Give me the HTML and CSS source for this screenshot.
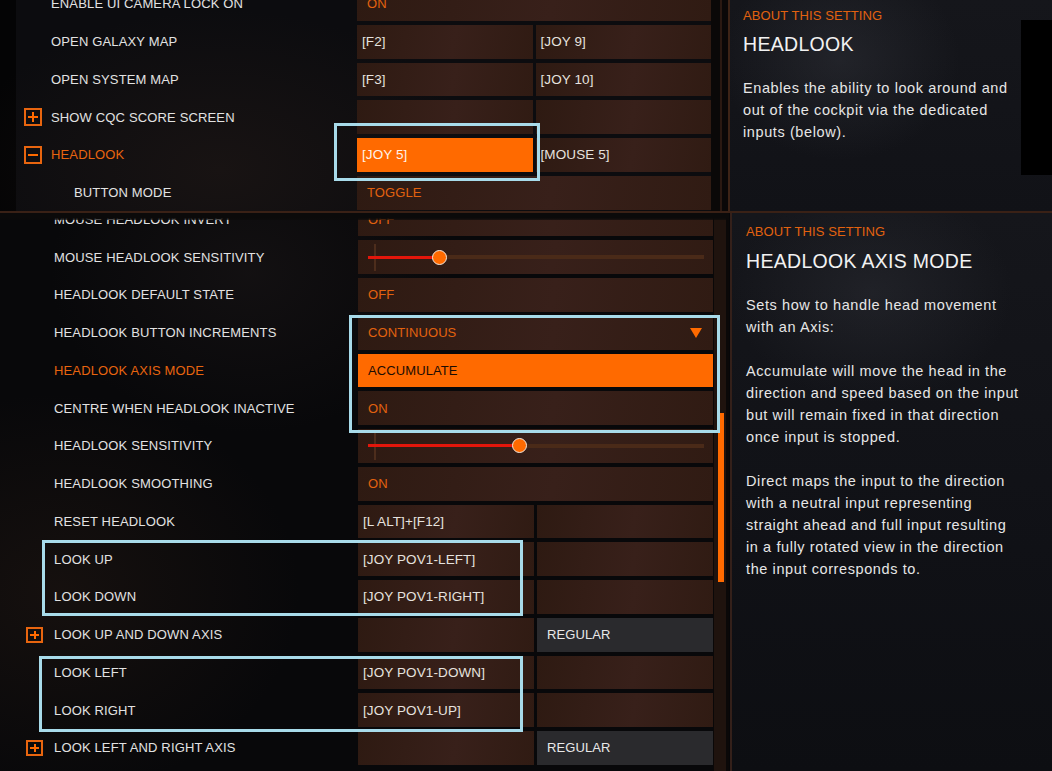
FILE: index.html
```html
<!DOCTYPE html>
<html lang="en">
<head>
  <meta charset="UTF-8">
  <title>Controls - Headlook</title>
  <link rel="stylesheet" href="styles.css">
</head>
<body>
  <div class="screen">

    <!-- upper list: general bindings -->
    <section class="panel panel-top">
      <div class="bindings">
        <div class="row">
          <div class="label">ENABLE UI CAMERA LOCK ON</div>
          <div class="cells"><div class="cell wide option">ON</div></div>
        </div>
        <div class="row">
          <div class="label">OPEN GALAXY MAP</div>
          <div class="cells"><div class="cell key">[F2]</div><div class="cell key">[JOY 9]</div></div>
        </div>
        <div class="row">
          <div class="label">OPEN SYSTEM MAP</div>
          <div class="cells"><div class="cell key">[F3]</div><div class="cell key">[JOY 10]</div></div>
        </div>
        <div class="row">
          <div class="label toggle"><span class="box plus"></span>SHOW CQC SCORE SCREEN</div>
          <div class="cells"><div class="cell"></div><div class="cell"></div></div>
        </div>
        <div class="row">
          <div class="label toggle active"><span class="box minus"></span>HEADLOOK</div>
          <div class="cells"><div class="cell key selected">[JOY 5]</div><div class="cell key">[MOUSE 5]</div></div>
        </div>
        <div class="row">
          <div class="label sub">BUTTON MODE</div>
          <div class="cells"><div class="cell wide option">TOGGLE</div></div>
        </div>
      </div>
      <div class="gutter"><span class="rail"></span></div>
      <aside class="info">
        <div class="info-text">
          <div class="info-kicker">ABOUT THIS SETTING</div>
          <h2 class="info-title">HEADLOOK</h2>
          <p>Enables the ability to look around and out of the cockpit via the dedicated inputs (below).</p>
        </div>
        <div class="blackout"></div>
      </aside>
      <div class="focus" style="left:334px;top:123px;width:206px;height:58px"></div>
    </section>

    <!-- lower list: headlook options -->
    <section class="panel panel-bottom">
      <div class="bindings">
        <div class="row">
          <div class="label">MOUSE HEADLOOK INVERT</div>
          <div class="cells"><div class="cell wide option">OFF</div></div>
        </div>
        <div class="row">
          <div class="label">MOUSE HEADLOOK SENSITIVITY</div>
          <div class="cells">
            <div class="cell wide">
              <div class="slider"><span class="tick"></span><span class="fill" style="width:21.2%"></span><span class="knob"></span><span class="rest"></span></div>
            </div>
          </div>
        </div>
        <div class="row">
          <div class="label">HEADLOOK DEFAULT STATE</div>
          <div class="cells"><div class="cell wide option">OFF</div></div>
        </div>
        <div class="row">
          <div class="label">HEADLOOK BUTTON INCREMENTS</div>
          <div class="cells">
            <div class="cell wide option dropdown">CONTINUOUS
              <svg class="caret" width="12" height="10" viewBox="0 0 12 10"><polygon points="0,0 12,0 6,10" fill="#ff6a00"/></svg>
            </div>
          </div>
        </div>
        <div class="row">
          <div class="label active">HEADLOOK AXIS MODE</div>
          <div class="cells"><div class="cell wide option picked">ACCUMULATE</div></div>
        </div>
        <div class="row">
          <div class="label">CENTRE WHEN HEADLOOK INACTIVE</div>
          <div class="cells"><div class="cell wide option">ON</div></div>
        </div>
        <div class="row">
          <div class="label">HEADLOOK SENSITIVITY</div>
          <div class="cells">
            <div class="cell wide">
              <div class="slider"><span class="tick"></span><span class="fill" style="width:44.8%"></span><span class="knob"></span><span class="rest"></span></div>
            </div>
          </div>
        </div>
        <div class="row">
          <div class="label">HEADLOOK SMOOTHING</div>
          <div class="cells"><div class="cell wide option">ON</div></div>
        </div>
        <div class="row">
          <div class="label">RESET HEADLOOK</div>
          <div class="cells"><div class="cell key">[L ALT]+[F12]</div><div class="cell"></div></div>
        </div>
        <div class="row">
          <div class="label">LOOK UP</div>
          <div class="cells"><div class="cell key">[JOY POV1-LEFT]</div><div class="cell"></div></div>
        </div>
        <div class="row">
          <div class="label">LOOK DOWN</div>
          <div class="cells"><div class="cell key">[JOY POV1-RIGHT]</div><div class="cell"></div></div>
        </div>
        <div class="row">
          <div class="label toggle"><span class="box plus"></span>LOOK UP AND DOWN AXIS</div>
          <div class="cells"><div class="cell"></div><div class="cell option grey">REGULAR</div></div>
        </div>
        <div class="row">
          <div class="label">LOOK LEFT</div>
          <div class="cells"><div class="cell key">[JOY POV1-DOWN]</div><div class="cell"></div></div>
        </div>
        <div class="row">
          <div class="label">LOOK RIGHT</div>
          <div class="cells"><div class="cell key">[JOY POV1-UP]</div><div class="cell"></div></div>
        </div>
        <div class="row">
          <div class="label toggle"><span class="box plus"></span>LOOK LEFT AND RIGHT AXIS</div>
          <div class="cells"><div class="cell"></div><div class="cell option grey">REGULAR</div></div>
        </div>
      </div>
      <div class="scrolltrack"><span class="thumb"></span></div>
      <aside class="info">
        <div class="info-text">
          <div class="info-kicker">ABOUT THIS SETTING</div>
          <h2 class="info-title">HEADLOOK AXIS MODE</h2>
          <p>Sets how to handle head movement with an Axis:</p>
          <p>Accumulate will move the head in the direction and speed based on the input but will remain fixed in that direction once input is stopped.</p>
          <p>Direct maps the input to the direction with a neutral input representing straight ahead and full input resulting in a fully rotated view in the direction the input corresponds to.</p>
        </div>
      </aside>
      <div class="focus" style="left:349px;top:102px;width:371px;height:118px"></div>
      <div class="focus" style="left:42px;top:327px;width:481px;height:76px"></div>
      <div class="focus" style="left:39px;top:443px;width:484px;height:76px"></div>
    </section>

  </div>
</body>
</html>
```

FILE: styles.css
```css
body {
  margin: 0;
  background: #060608;
  font-family: "Liberation Sans", Arial, sans-serif;
  color: #e4e4e4;
  overflow: hidden;
}
.screen {
  width: 1052px;
  height: 771px;
  display: flex;
  flex-direction: column;
}

/* panels */
.panel {
  position: relative;
  display: grid;
  overflow: hidden;
}
.panel-top {
  height: 211px;
  grid-template-columns: 711px 17px 1fr;
  border-bottom: 2px solid #3a2116;
  --label-col: 357px;
  --indent: 51px;
  --toggle-indent: 24px;
  --list-shift: -15px;
}
.panel-bottom {
  flex: 1;
  grid-template-columns: 713px 16px 1fr;
  --label-col: 358px;
  --indent: 54px;
  --toggle-indent: 26px;
  --list-shift: -12.4px;
}
/* the header strip casts a shadow over the first row below it */
.panel-bottom::before {
  content: "";
  position: absolute;
  left: 0;
  top: 0;
  width: 729px;
  height: 7px;
  background: linear-gradient(180deg, #0b0a0a 5px, rgba(11, 10, 10, 0.6));
  z-index: 2;
}

/* binding list */
.bindings {
  background:
    radial-gradient(ellipse 260px 160px at 220px 80%, rgba(60, 40, 30, 0.25), transparent),
    linear-gradient(90deg, #040405 16px, #0c0c0f 16px);
}
.panel-bottom .bindings {
  background:
    radial-gradient(ellipse 240px 200px at 60px 380px, rgba(70, 45, 30, 0.22), transparent),
    radial-gradient(ellipse 200px 160px at 250px 60px, rgba(50, 40, 40, 0.25), transparent),
    #08080a;
}
.bindings .row:first-child {
  margin-top: var(--list-shift);
}
.row {
  height: 37.75px;
  display: grid;
  grid-template-columns: var(--label-col) 1fr;
}
.label {
  display: flex;
  align-items: center;
  padding-left: var(--indent);
  font-size: 13px;
  letter-spacing: 0.15px;
  color: #e2e2e2;
  white-space: nowrap;
}
.label.toggle {
  padding-left: var(--toggle-indent);
}
.label.sub {
  padding-left: 74px;
}
.label.active {
  color: #e8650f;
}

/* expand / collapse boxes */
.box {
  position: relative;
  box-sizing: border-box;
  width: 18px;
  height: 18px;
  margin-right: calc(var(--indent) - var(--toggle-indent) - 18px);
  border: 2px solid #e8650f;
}
.panel-bottom .box {
  width: 17px;
  height: 16px;
  margin-right: calc(var(--indent) - var(--toggle-indent) - 17px);
}
.box::before,
.box::after {
  content: "";
  position: absolute;
  background: #ff6a00;
  left: 2px;
  right: 2px;
  top: 50%;
  height: 2px;
  margin-top: -1px;
}
.box.plus::after {
  left: 50%;
  right: auto;
  width: 2px;
  margin-left: -1px;
  top: 2px;
  bottom: 2px;
  height: auto;
  margin-top: 0;
}
.box.minus::after {
  display: none;
}

/* value cells */
.cells {
  display: grid;
  grid-template-columns: 1fr 1fr;
  gap: 3px;
  padding: 2px 0;
}
.cell {
  display: flex;
  align-items: center;
  min-width: 0;
  background: linear-gradient(100deg, #2e1a12, #38201a 55%, #301b13);
  font-size: 13.5px;
  letter-spacing: 0.1px;
  color: #e6e2df;
  white-space: nowrap;
}
.cell.wide {
  grid-column: 1 / 3;
}
.cell.key {
  padding-left: 5px;
}
.cell.option {
  padding-left: 10px;
  font-size: 13px;
  color: #e2620f;
}
.cell.selected {
  background: #ff6a00;
  color: #fff3ea;
}
.cell.picked {
  background: #ff6a00;
  color: #1c0c03;
}
.cell.grey {
  background: #2a2a2d;
  color: #e8e8e8;
}
.cell.dropdown {
  justify-content: space-between;
  padding-right: 11px;
}

/* sliders */
.slider {
  position: relative;
  flex: 1;
  align-self: stretch;
  display: flex;
  align-items: center;
  margin: 0 9px 0 10px;
}
.tick {
  position: absolute;
  left: 6px;
  top: 4px;
  bottom: 3px;
  width: 2px;
  background: #4d2d1c;
}
.fill {
  position: relative;
  height: 3px;
  background: #e3160b;
}
.knob {
  position: relative;
  box-sizing: border-box;
  width: 15px;
  height: 15px;
  margin: 0 -7px;
  border: 1.5px solid #f4e8e0;
  border-radius: 50%;
  background: #ff6a00;
  z-index: 1;
}
.rest {
  flex: 1;
  height: 4px;
  background: #4a2a18;
}

/* gutter and scrollbar */
.gutter {
  display: flex;
  justify-content: center;
  padding-left: 3px;
  background: #0a0808;
}
.rail {
  width: 2px;
  background: #2a1912;
}
.scrolltrack {
  display: flex;
  justify-content: center;
  background: linear-gradient(90deg, #0a0808 1px, #1f130e 1px, #1f130e 13px, #0a0808 13px);
}
.thumb {
  width: 6px;
  height: 169px;
  margin-top: 200px;
  background: #ff6a00;
}

/* side description */
.info {
  display: flex;
  border-left: 2px solid #3d2417;
  background:
    radial-gradient(ellipse 120px 100px at 110px 60px, rgba(60, 62, 70, 0.35), transparent),
    linear-gradient(180deg, #15161b, #111217);
}
.panel-bottom .info {
  border-left-color: #34201a;
  margin-left: 1px;
  background:
    radial-gradient(ellipse 140px 110px at 140px 80px, rgba(60, 62, 70, 0.3), transparent),
    linear-gradient(180deg, #15161b, #101116 60%, #0d0e12);
}
.info-text {
  flex: 1;
  padding: 8px 0 0 13px;
}
.panel-bottom .info-text {
  padding: 11px 0 0 14px;
}
.info-kicker {
  font-size: 13px;
  line-height: 16px;
  letter-spacing: 0.1px;
  color: #e2620f;
}
.info-title {
  margin: 8px 0 0;
  font-size: 19.5px;
  line-height: 24px;
  font-weight: normal;
  letter-spacing: 0.3px;
  color: #f2f2f2;
}
.panel-bottom .info-title {
  margin-top: 9px;
}
.info p {
  width: 275px;
  margin: 21px 0 0;
  font-size: 14.5px;
  line-height: 22px;
  letter-spacing: 0.6px;
  color: #e6e6e6;
}
.info p + p {
  margin-top: 22px;
}
.blackout {
  width: 31px;
  height: 155px;
  margin-top: 20px;
  background: #000;
}

/* controller focus outlines */
.focus {
  position: absolute;
  box-sizing: border-box;
  border: 3px solid #a8dbea;
  pointer-events: none;
}
```
